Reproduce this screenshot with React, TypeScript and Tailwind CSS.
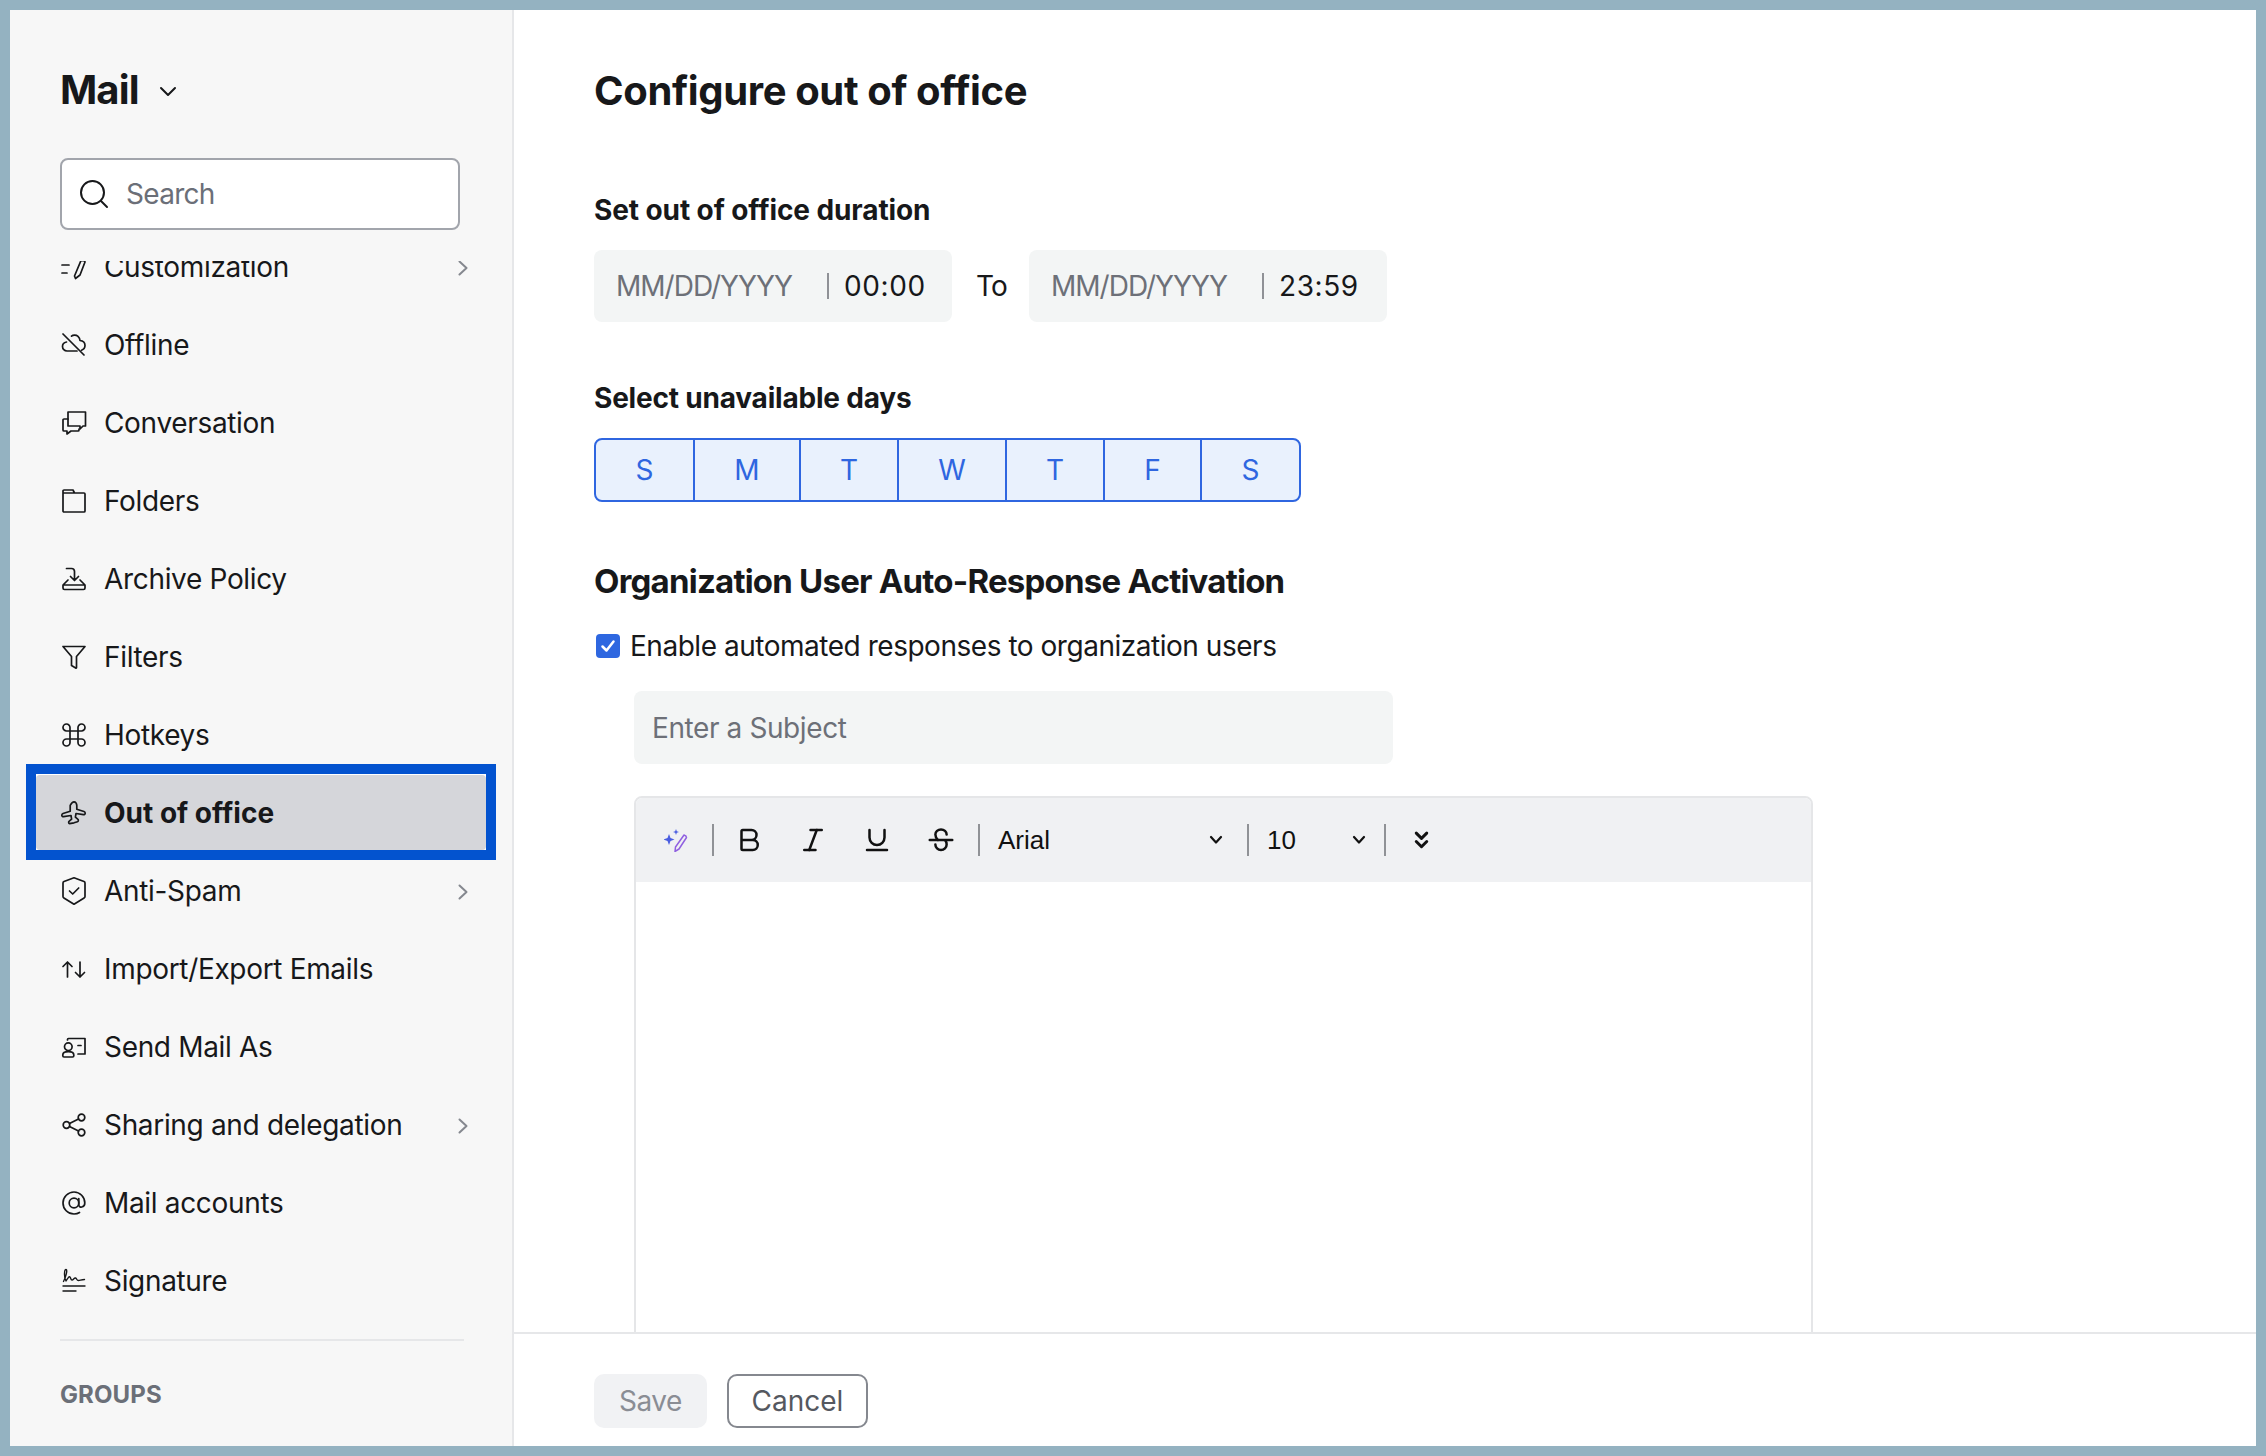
import { Bold, Italic, Underline } from 'lucide-react'
import type { ReactNode } from 'react'

const Ico = ({ children }: { children: ReactNode }) => (
  <svg width="24" height="24" viewBox="0 0 24 24" fill="none" stroke="currentColor" strokeWidth="1.7" strokeLinecap="round" strokeLinejoin="round" className="shrink-0 overflow-visible">
    {children}
  </svg>
)

const icons: Record<string, ReactNode> = {
  custom: <><path d="M0 10h7M0 18h5" /><path d="M19 5.500c2.500 0 4 .7 4 1.500l-5 13-4.500 3.500-1-2.500z" /></>,
  offline: <><path d="M1 1l21 21" /><path d="M9.500 3.200C11 1.800 14 1.500 16 3.300c1.500 1.500 2 3.200 2 4.200 3 .3 5 2.500 5 5 0 2.500-1.500 4-3.500 4.700" /><path d="M15 18H5c-2.500 0-4.500-2-4.500-4.500 0-2 1.500-4 4-4.500" /></>,
  conv: <><path d="M6 1h17.500v14H21l-3 3v-3H6z" /><path d="M6 8H2a1 1 0 0 0-1 1v10a1 1 0 0 0 1 1h3v3l4-3h7a1 1 0 0 0 1-1v-1" /></>,
  folder: <path d="M1 22V2a1 1 0 0 1 1-1h9l1.500 3H22a1 1 0 0 1 1 1v17a1 1 0 0 1-1 1H2a1 1 0 0 1-1-1zM1 4h11.500" />,
  archive: <><path d="M4.500 1.500h5c1.800 0 3 1.200 3 3v8.500M8.500 9.500l4 4 4-4" /><path d="M6 13l-5 5v3a1.500 1.500 0 0 0 1.500 1.500h19A1.500 1.500 0 0 0 23 21v-3l-5-5M1 18h22" /></>,
  filter: <path d="M1 1.500h22L14.500 11.500v11c0 .5-.4.8-.8.5L9.500 20.500V11.500z" />,
  hotkeys: <path d="M8 8h8v8H8zM8 8V4.500a3.500 3.500 0 1 0-3.500 3.500H8M16 8V4.500a3.500 3.500 0 1 1 3.500 3.500H16M8 16v3.500a3.500 3.500 0 1 1-3.500-3.500H8M16 16v3.500a3.500 3.500 0 1 0 3.500-3.500H16" />,
  plane: <path d="M12 .8c1.600 0 2.800 1.700 2.800 3.600v3.800l7.200 2.300c.8.3 1.200 1 1.200 1.700 0 1-.8 1.600-1.800 1.500l-7.400-1.200-.6 3.600 2.600 2.300c.5.4.5 2.300-.5 2.300L12 21.800l-4.500.9c-1 0-1-1.900-.5-2.300l2.600-2.300-.6-3.600-7.400 1.200c-1 .1-1.800-.5-1.800-1.500 0-.7.4-1.400 1.200-1.700l7.200-2.300V4.400C9.200 2.500 10.400.8 12 .8z" />,
  shield: <><path d="M12-1.200l10 3.700c.7.3 1 .7 1 1.400V17.500c0 .7-.3 1.200-.9 1.500L12 25.200 1.900 19c-.6-.3-.9-.8-.9-1.500V3.900c0-.7.3-1.100 1-1.400z" /><path d="M7.500 12l3.200 3 6-6" /></>,
  io: <><path d="M5.500 20V5M1 9.500L5.500 5 10 9.500" /><path d="M18 5v15M13.500 15.500L18 20l4.500-4.500" /></>,
  send: <><circle cx="6.300" cy="11.700" r="3.800" /><path d="M.8 20c0-2 2.500-3.300 5.500-3.300s5.500 1.300 5.500 3.300v.8a1.200 1.200 0 0 1-1.200 1.200H2a1.200 1.200 0 0 1-1.200-1.200zM5.500 5V4.500a1 1 0 0 1 1-1H23v15.500h-7M16 10.500h3" /></>,
  share: <><circle cx="19.500" cy="4.500" r="3.300" /><circle cx="4.500" cy="12" r="3.300" /><circle cx="19.500" cy="19.500" r="3.300" /><path d="M7.500 10.500l9-4.500M7.500 13.500l9 4.500" /></>,
  at: <><circle cx="12" cy="12" r="4.800" /><path d="M16.800 7.500v6.500c0 3 6 3 6-2 0-6-4.800-11-10.800-11S1 6 1 12s4.800 11 11 11c2.200 0 4-.5 5.500-1.500" /></>,
  sign: <><path d="M1 17h22M1 22h13" strokeWidth="1.400" /><path d="M1.500 12.500C3.500 9 6 .5 4 .5 2.200.5 1.800 8 4 12c2-3 3-5 4-4s.5 3 2 3 2-2.500 3.500-2 1 2.500 3 2.500c1.500 0 3-1 6-1" strokeWidth="1.400" /></>,
}

const items = [
  { label: 'Customization', icon: 'custom', more: true },
  { label: 'Offline', icon: 'offline' },
  { label: 'Conversation', icon: 'conv' },
  { label: 'Folders', icon: 'folder' },
  { label: 'Archive Policy', icon: 'archive' },
  { label: 'Filters', icon: 'filter' },
  { label: 'Hotkeys', icon: 'hotkeys' },
  { label: 'Out of office', icon: 'plane', active: true },
  { label: 'Anti-Spam', icon: 'shield', more: true },
  { label: 'Import/Export Emails', icon: 'io' },
  { label: 'Send Mail As', icon: 'send' },
  { label: 'Sharing and delegation', icon: 'share', more: true },
  { label: 'Mail accounts', icon: 'at' },
  { label: 'Signature', icon: 'sign' },
]

const days = [
  { d: 'S', w: 'w-[99px]' },
  { d: 'M', w: 'w-[106px]' },
  { d: 'T', w: 'w-[98px]' },
  { d: 'W', w: 'w-[108px]' },
  { d: 'T', w: 'w-[98px]' },
  { d: 'F', w: 'w-[97px]' },
  { d: 'S', w: 'w-[97px]' },
]

const Chevron = ({ className }: { className: string }) => (
  <svg width="14" height="10" viewBox="0 0 14 10" fill="none" stroke="currentColor" strokeWidth="2.200" strokeLinecap="round" strokeLinejoin="round" className={className}>
    <path d="M2 2l5 5.500L12 2" />
  </svg>
)

const Sep = ({ className }: { className: string }) => <div className={`w-[2px] h-[32px] bg-[#909296] shrink-0 ${className}`} />

const DateBox = ({ time, ml }: { time: string; ml: string }) => (
  <div className={`w-[358px] h-[72px] rounded-lg bg-[#f3f5f5] flex items-center pl-[22px] ${ml}`}>
    <span className="w-[211px] text-[28px] tracking-[-1px] text-[#6d7078]">MM/DD/YYYY</span>
    <span className="w-[2px] h-[26px] bg-[#8f9196]" />
    <span className="ml-[15px] text-[28px] tracking-[0.6px] text-[#17181a]">{time}</span>
  </div>
)

export default function App() {
  return (
    <div className="w-[2266px] h-[1456px] bg-[#94b2c1] p-[10px] font-['Inter',sans-serif] text-[#17181a] overflow-hidden">
      <div className="w-full h-full flex bg-white">
        <aside className="w-[504px] h-full shrink-0 bg-[#f7f7f7] border-r-2 border-[#e6e7e9] flex flex-col overflow-hidden">
          <div className="h-[251px] shrink-0 pl-[50px]">
            <div className="flex items-center h-[50px] mt-[55px]">
              <span className="text-[40px] font-bold tracking-[-0.9px]">Mail</span>
              <svg width="18" height="12" viewBox="0 0 18 12" fill="none" stroke="currentColor" strokeWidth="2" strokeLinecap="round" strokeLinejoin="round" className="ml-[20px] mt-[4px]">
                <path d="M2 2l7 7 7-7" />
              </svg>
            </div>
            <div className="w-[400px] h-[72px] mt-[43px] rounded-lg bg-white border-2 border-[#a2a5ac] flex items-center pl-[17px]">
              <svg width="30" height="30" viewBox="0 0 30 30" fill="none" stroke="#17181a" strokeWidth="2" strokeLinecap="round">
                <circle cx="13.500" cy="13.500" r="11.500" />
                <path d="M22 22l6 6" />
              </svg>
              <span className="ml-[17px] text-[28px] tracking-[-0.7px] text-[#6b6f78]">Search</span>
            </div>
          </div>
          <div className="flex-1 overflow-hidden">
            <div className="-mt-[33px]">
              <div className="flex flex-col gap-[2px]">
                {items.map((item) => (
                  <div
                    key={item.label}
                    className={
                      item.active
                        ? 'mx-[26px] h-[76px] pt-[1px] bg-white outline-[10px] outline-[#0353cf]'
                        : 'mx-[26px] h-[76px]'
                    }
                  >
                    <div
                      className={
                        item.active
                          ? 'relative h-full pt-[1px] pl-[26px] flex items-center bg-[#d5d6da] rounded-[4px] text-[28px] font-bold'
                          : 'relative h-full pt-[2px] pl-[26px] flex items-center text-[28px] tracking-[-0.33px]'
                      }
                    >
                      <Ico>{icons[item.icon]}</Ico>
                      <span className="ml-[18px]">{item.label}</span>
                      {item.more && (
                        <svg width="10" height="16" viewBox="0 0 10 16" fill="none" stroke="#85888f" strokeWidth="2" strokeLinecap="round" strokeLinejoin="round" className="absolute right-[18px] top-[32px]">
                          <path d="M1.500 1.500l7 6.500-7 6.500" />
                        </svg>
                      )}
                    </div>
                  </div>
                ))}
              </div>
              <div className="ml-[50px] w-[404px] h-[2px] bg-[#e6e7e9] mt-[21px]" />
              <div className="ml-[50px] mt-[39px] text-[24px] leading-[30px] font-bold text-[#6b6f78] tracking-[0.1px]">GROUPS</div>
            </div>
          </div>
        </aside>
        <main className="flex-1 min-w-0 flex flex-col">
          <div className="flex-1 min-h-0 overflow-hidden pl-[80px]">
            <h1 className="mt-[56px] text-[40px] leading-[50px] font-bold tracking-[-0.37px]">Configure out of office</h1>
            <div className="mt-[76px] text-[28px] leading-[36px] font-bold tracking-[-0.1px]">Set out of office duration</div>
            <div className="mt-[22px] flex items-center">
              <DateBox time="00:00" ml="" />
              <span className="ml-[24px] w-[28px] text-[28px] tracking-[-1px] whitespace-nowrap">To</span>
              <DateBox time="23:59" ml="ml-[25px]" />
            </div>
            <div className="mt-[58px] text-[28px] leading-[36px] font-bold tracking-[-0.2px]">Select unavailable days</div>
            <div className="mt-[22px] w-[707px] h-[64px] border-2 border-[#2f66e0] rounded-lg bg-[#e9f1fd] flex overflow-hidden">
              {days.map((day, i) => (
                <div
                  key={i}
                  className={
                    i < days.length - 1
                      ? `${day.w} h-full border-r-2 border-[#2f66e0] flex items-center justify-center text-[28px] text-[#2f66e0]`
                      : `${day.w} h-full flex items-center justify-center text-[28px] text-[#2f66e0]`
                  }
                >
                  {day.d}
                </div>
              ))}
            </div>
            <div className="mt-[58px] text-[33px] leading-[42px] font-bold tracking-[-0.78px]">Organization User Auto-Response Activation</div>
            <div className="mt-[30px] h-[28px] flex items-center pl-[2px]">
              <span className="w-[24px] h-[24px] rounded-[4px] bg-[#2e67e0] flex items-center justify-center">
                <svg width="18" height="18" viewBox="0 0 18 18" fill="none" stroke="white" strokeWidth="2.500" strokeLinecap="round" strokeLinejoin="round">
                  <path d="M3.500 9.500l4 4 7-9" />
                </svg>
              </span>
              <span className="ml-[10px] text-[28px] tracking-[-0.47px]">Enable automated responses to organization users</span>
            </div>
            <div className="mt-[31px] ml-[40px] w-[759px] h-[73px] rounded-lg bg-[#f3f5f5] flex items-center pl-[18px] text-[28px] tracking-[-0.4px] text-[#6d7078]">Enter a Subject</div>
            <div className="mt-[32px] ml-[40px] w-[1179px] h-[700px] border-2 border-[#e5e6e8] rounded-t-lg">
              <div className="h-[84px] bg-[#f0f1f3] flex items-center pl-[28px] text-[#111] rounded-t-md">
                <svg width="24" height="24" viewBox="0 0 24 24" fill="none" className="shrink-0">
                  <path d="M5 6l1.500 4 4 1.500-4 1.500L5 17l-1.500-4-4-1.500 4-1.500z" fill="#4a5de0" />
                  <path d="M12 1l.8 2.200L15 4l-2.200.8L12 7l-.8-2.200L9 4l2.200-.8z" fill="#4a5de0" />
                  <path d="M20 7c1.500.5 2.500 1.500 2.500 2.500L15 21l-4 2.500.5-4.500z" stroke="#9060e0" strokeWidth="1.500" strokeLinejoin="round" />
                </svg>
                <Sep className="ml-[24px]" />
                <Bold size={30} strokeWidth={2} className="ml-[20px] shrink-0" />
                <Italic size={30} strokeWidth={2} className="ml-[34px] shrink-0" />
                <Underline size={30} strokeWidth={2} className="ml-[34px] shrink-0" />
                <svg width="30" height="30" viewBox="0 0 24 24" fill="none" stroke="currentColor" strokeWidth="2" strokeLinecap="round" className="ml-[34px] shrink-0">
                  <path d="M3 12h18" />
                  <path d="M16.500 7.500a4.500 4 0 0 0-9 0c0 1.500.7 3 2 4.500" />
                  <path d="M15.500 12.500c.7.8 1 1.800 1 3a4.500 4.500 0 0 1-9 0" />
                </svg>
                <Sep className="ml-[22px]" />
                <span className="ml-[18px] w-[211px] font-['Liberation_Sans',sans-serif] text-[26px]">Arial</span>
                <Chevron className="shrink-0" />
                <Sep className="ml-[24px]" />
                <span className="ml-[18px] w-[85px] font-['Liberation_Sans',sans-serif] text-[26px]">10</span>
                <Chevron className="shrink-0" />
                <Sep className="ml-[18px]" />
                <svg width="17" height="21" viewBox="0 0 16 20" fill="none" stroke="#111" strokeWidth="2.800" strokeLinecap="round" strokeLinejoin="round" className="ml-[27px] shrink-0">
                  <path d="M3 3l5 5 5-5M3 11l5 5 5-5" />
                </svg>
              </div>
            </div>
          </div>
          <div className="h-[114px] shrink-0 border-t-2 border-[#e6e7e9] pl-[80px] pt-[40px] flex items-start">
            <div className="w-[113px] h-[54px] rounded-[10px] bg-[#f1f2f4] text-[#8a8d94] text-[28px] tracking-[-0.5px] flex items-center justify-center">Save</div>
            <div className="ml-[20px] w-[141px] h-[54px] rounded-[10px] border-2 border-[#85888f] text-[#555860] text-[28px] flex items-center justify-center">Cancel</div>
          </div>
        </main>
      </div>
    </div>
  )
}
